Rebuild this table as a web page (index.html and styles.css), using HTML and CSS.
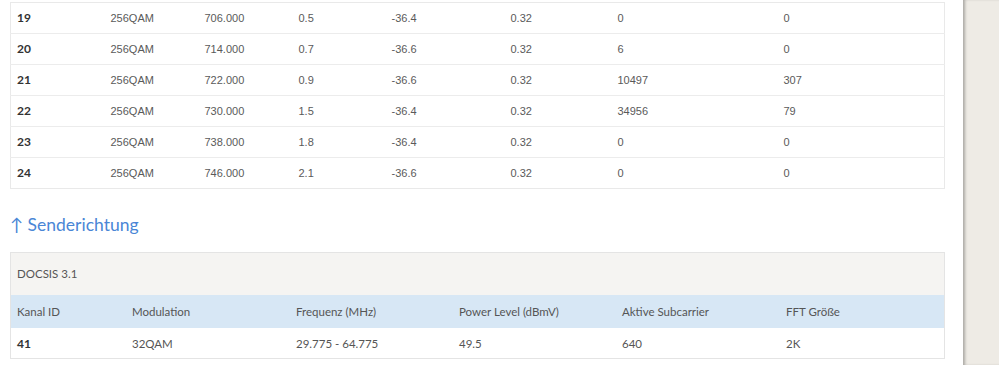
FILE: index.html
```html
<!DOCTYPE html>
<html lang="de">
<head>
<meta charset="utf-8">
<link rel="stylesheet" href="styles.css">
</head>
<body>
<div class="page">
  <main class="main">
    <table class="tbl down">
      <colgroup>
        <col style="width:94px"><col style="width:94px"><col style="width:94px"><col style="width:93px">
        <col style="width:119px"><col style="width:107px"><col style="width:166px"><col>
      </colgroup>
      <tbody>
        <tr><td class="id">19</td><td>256QAM</td><td>706.000</td><td>0.5</td><td>-36.4</td><td>0.32</td><td>0</td><td>0</td></tr>
        <tr><td class="id">20</td><td>256QAM</td><td>714.000</td><td>0.7</td><td>-36.6</td><td>0.32</td><td>6</td><td>0</td></tr>
        <tr><td class="id">21</td><td>256QAM</td><td>722.000</td><td>0.9</td><td>-36.6</td><td>0.32</td><td>10497</td><td>307</td></tr>
        <tr><td class="id">22</td><td>256QAM</td><td>730.000</td><td>1.5</td><td>-36.4</td><td>0.32</td><td>34956</td><td>79</td></tr>
        <tr><td class="id">23</td><td>256QAM</td><td>738.000</td><td>1.8</td><td>-36.4</td><td>0.32</td><td>0</td><td>0</td></tr>
        <tr><td class="id">24</td><td>256QAM</td><td>746.000</td><td>2.1</td><td>-36.6</td><td>0.32</td><td>0</td><td>0</td></tr>
      </tbody>
    </table>

    <h2 class="heading">↑ Senderichtung</h2>

    <div class="box">
      <div class="box-title">DOCSIS 3.1</div>
      <table class="tbl up">
        <colgroup>
          <col style="width:115px"><col style="width:164px"><col style="width:163px"><col style="width:163px"><col style="width:164px"><col>
        </colgroup>
        <thead>
          <tr><th>Kanal ID</th><th>Modulation</th><th>Frequenz (MHz)</th><th>Power Level (dBmV)</th><th>Aktive Subcarrier</th><th>FFT Größe</th></tr>
        </thead>
        <tbody>
          <tr><td class="id">41</td><td>32QAM</td><td>29.775 - 64.775</td><td>49.5</td><td>640</td><td>2K</td></tr>
        </tbody>
      </table>
    </div>
  </main>
  <aside class="side"></aside>
</div>
</body>
</html>
```

FILE: styles.css
```css
html, body {
  margin: 0;
  padding: 0;
  height: 100%;
  overflow: hidden;
}
body {
  font-family: Lato, "Liberation Sans", Arial, sans-serif;
  color: #555;
  background: #fff;
}
.page {
  display: flex;
  height: 365px;
}
.main {
  width: 953px;
  padding: 2px 0 0 10px;
  background: #fff;
  flex: none;
}
.side {
  flex: 1;
  background: #eeebe5;
  box-shadow: inset 3px 0 3px -1px rgba(0,0,0,0.28);
}
.tbl {
  width: 935px;
  border-collapse: collapse;
  table-layout: fixed;
}
.down {
  border: 1px solid #e9e9e9;
}
.down td {
  height: 31px;
  box-sizing: border-box;
  padding: 0 0 0 6px;
  border-top: 1px solid #ececec;
  font-family: "Liberation Sans", Arial, sans-serif;
  font-size: 11px;
  line-height: 14px;
  color: #5a5a5a;
  vertical-align: middle;
  white-space: nowrap;
}
.down tr:first-child td { border-top: none; }
td.id {
  font-family: Lato, sans-serif;
  font-weight: bold;
  font-size: 12px;
  color: #333;
}
.heading {
  margin: 24px 0 0 0;
  height: 24px;
  font-size: 17.5px;
  line-height: 24px;
  font-weight: normal;
  color: #4a86d6;
}
.box {
  margin-top: 15px;
  width: 933px;
  border: 1px solid #e4e4e4;
}
.box-title {
  height: 42px;
  line-height: 42px;
  padding-left: 6px;
  background: #f5f4f2;
  font-size: 11.5px;
  color: #555;
}
.up {
  width: 933px;
}
.up th {
  height: 33px;
  padding: 0 0 0 6px;
  background: #d7e7f5;
  text-align: left;
  font-weight: normal;
  font-size: 11.5px;
  color: #555;
}
.up td {
  height: 30px;
  padding: 0 0 0 6px;
  font-size: 11.5px;
  color: #555;
  white-space: nowrap;
}
.up td.id { color: #333; font-size: 12px; }
```
